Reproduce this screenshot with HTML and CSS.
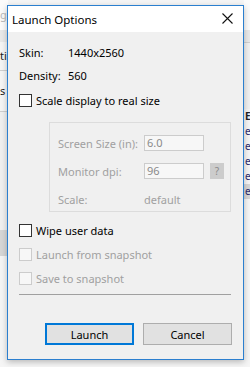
FILE: index.html
```html
<!DOCTYPE html>
<html lang="en">
<head>
  <meta charset="UTF-8">
  <meta name="viewport" content="width=device-width, initial-scale=1.0">
  <title>Launch Options</title>
  <link rel="stylesheet" href="styles.css">
</head>
<body>
  <div class="backdrop">
    <div class="strip strip-left">
      <div class="bg-row bg-top">g</div>
      <div class="bg-row bg-band"></div>
      <div class="bg-row bg-cell">ti</div>
      <div class="bg-row bg-cell tall">s</div>
      <div class="bg-row bg-empty"></div>
      <div class="bg-row bg-band low"></div>
    </div>
    <div class="strip strip-right">
      <div class="bg-row bg-top r"></div>
      <div class="bg-row bg-band r"></div>
      <div class="bg-row r-gap"></div>
      <div class="bg-letter bold">E</div>
      <div class="bg-letter">e</div>
      <div class="bg-letter">e</div>
      <div class="bg-letter">e</div>
      <div class="bg-letter">e</div>
      <div class="bg-letter shade">e</div>
    </div>
  </div>

  <div class="dialog">
    <div class="titlebar">
      <span class="title">Launch Options</span>
      <svg class="close" width="11" height="11" viewBox="0 0 11 11">
        <path d="M0.5 0.5 L10.5 10.5 M10.5 0.5 L0.5 10.5" stroke="#111" stroke-width="1.1" fill="none"/>
      </svg>
    </div>

    <div class="content">
      <div class="info-row"><span class="key">Skin:</span><span>1440x2560</span></div>
      <div class="info-row"><span class="key">Density:</span><span>560</span></div>

      <label class="check-row first"><span class="box"></span>Scale display to real size</label>

      <div class="group">
        <div class="field-row">
          <span class="field-label">Screen Size (in):</span>
          <span class="field-input">6.0</span>
        </div>
        <div class="field-row">
          <span class="field-label">Monitor dpi:</span>
          <span class="field-input">96</span>
          <span class="help">?</span>
        </div>
        <div class="field-row">
          <span class="field-label">Scale:</span>
          <span class="field-value">default</span>
        </div>
      </div>

      <label class="check-row wipe"><span class="box"></span>Wipe user data</label>
      <label class="check-row disabled"><span class="box"></span>Launch from snapshot</label>
      <label class="check-row disabled"><span class="box"></span>Save to snapshot</label>

      <div class="separator"></div>

      <div class="buttons">
        <button class="btn default">Launch</button>
        <button class="btn">Cancel</button>
      </div>
    </div>
  </div>
</body>
</html>
```

FILE: styles.css
```css
body {
  margin: 0;
  width: 250px;
  height: 367px;
  overflow: hidden;
  background: #f5f5f5;
  font-family: "Segoe UI", "Noto Sans", sans-serif;
  font-size: 11px;
  color: #000;
  position: relative;
}

/* app behind the dialog */
.backdrop {
  display: flex;
  justify-content: space-between;
  height: 367px;
}
.strip {
  width: 8px;
  overflow: hidden;
  display: flex;
  flex-direction: column;
  white-space: nowrap;
}
.strip-right {
  width: 6px;
}
.bg-row {
  font-size: 11px;
  line-height: 14px;
}
.bg-top {
  height: 30px;
  background: #fbfbfb;
  color: #b8b8b8;
  padding-top: 8px;
  box-sizing: border-box;
}
.bg-band {
  height: 12px;
  background: #e9e9e9;
}
.bg-band.low {
  height: 26px;
  background: #d6d6d6;
}
.bg-cell {
  height: 28px;
  display: flex;
  align-items: center;
  border-bottom: 1px solid #cfcfcf;
  color: #222;
}
.bg-cell.tall {
  height: 40px;
}
.bg-empty {
  height: 118px;
  background: #f0f0f0;
}
.r-gap {
  height: 66px;
  background: #f0f0f0;
  border-top: 1px solid #d0d0d0;
}
.bg-letter {
  height: 15px;
  line-height: 15px;
  font-size: 10px;
  padding-left: 1px;
  color: #2a2a6a;
}
.bg-letter.bold {
  font-weight: bold;
  color: #222;
}
.bg-letter.shade {
  background: #d6d6d6;
}

/* dialog */
.dialog {
  position: absolute;
  left: 7px;
  top: 5px;
  width: 237px;
  height: 355px;
  box-sizing: border-box;
  border: 1px solid #2b7fcf;
  background: #f0f0f0;
  box-shadow: 0 2px 6px rgba(0, 0, 0, 0.25);
}
.titlebar {
  height: 26px;
  background: #fff;
  display: flex;
  align-items: center;
  justify-content: space-between;
  padding: 0 10px 0 4px;
}
.title {
  font-size: 11.5px;
  color: #000;
}
.close {
  margin-top: -1px;
}

.content {
  padding: 9px 12px 0 11px;
}
.info-row {
  height: 23px;
  display: flex;
  align-items: center;
}
.key {
  width: 49px;
}

.check-row {
  height: 24px;
  display: flex;
  align-items: center;
  gap: 4px;
}
.check-row.first {
  margin-top: 1px;
}
.box {
  width: 11px;
  height: 11px;
  border: 1px solid #333;
  background: #fff;
}
.check-row.disabled {
  color: #a0a0a0;
}
.check-row.disabled .box {
  border-color: #cccccc;
  background: #f7f7f7;
}

.group {
  margin: 10px 0 0 30px;
  height: 90px;
  box-sizing: border-box;
  border: 1px solid #dcdcdc;
  padding: 12px 0 0 8px;
  display: flex;
  flex-direction: column;
  gap: 12px;
  color: #a0a0a0;
}
.field-row {
  height: 16px;
  display: flex;
  align-items: center;
  white-space: nowrap;
}
.field-label {
  width: 86px;
  flex-shrink: 0;
}
.field-input {
  width: 56px;
  height: 14px;
  border: 1px solid #cccccc;
  background: #f7f7f7;
  padding-left: 2px;
  line-height: 14px;
  color: #8a8a8a;
  box-sizing: content-box;
}
.help {
  margin-left: 6px;
  width: 14px;
  height: 16px;
  background: #cccccc;
  color: #8a8a8a;
  font-size: 10px;
  display: flex;
  align-items: center;
  justify-content: center;
}

.check-row.wipe {
  margin-top: 6px;
}

.separator {
  margin-top: 4px;
  height: 1px;
  background: #a0a0a0;
}

.buttons {
  margin-top: 28px;
  display: flex;
  justify-content: flex-end;
  gap: 9px;
  margin-right: -1px;
}
.btn {
  width: 89px;
  height: 22px;
  box-sizing: border-box;
  font-family: inherit;
  font-size: 11px;
  color: #000;
  background: #e1e1e1;
  border: 1px solid #adadad;
  padding: 0;
}
.btn.default {
  border: 2px solid #0078d7;
}
```
